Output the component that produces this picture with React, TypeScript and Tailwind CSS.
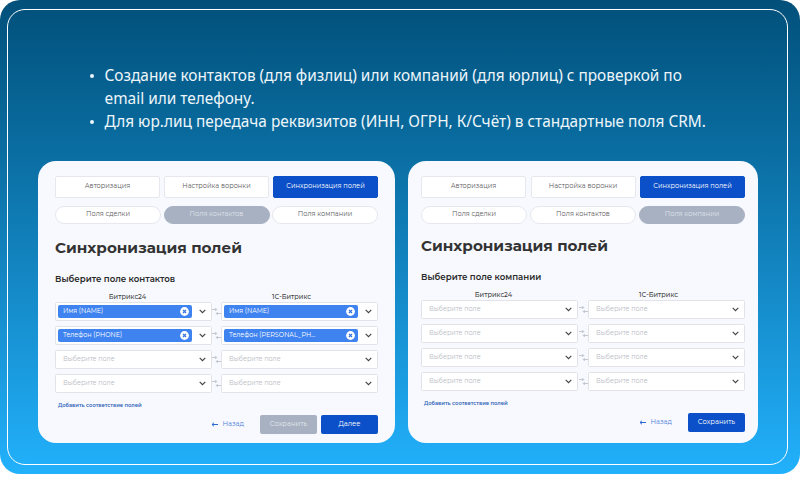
const font = "font-['Montserrat','Inter','Noto_Sans',sans-serif]";

function Chevron() {
  return (
    <svg width="7" height="5" viewBox="0 0 7 5" fill="none" className="shrink-0">
      <path d="M0.7 0.8 L3.5 3.6 L6.3 0.8" stroke="#3f3f46" strokeWidth="1.1" />
    </svg>
  );
}

function Swap() {
  return (
    <svg width="9" height="9" viewBox="0 0 9 9" fill="none" className="shrink-0">
      <path d="M0 2.5 H4.5 M3.2 1 L4.7 2.5 L3.2 4 M9 6.5 H4.5 M5.8 5 L4.3 6.5 L5.8 8" stroke="#aab0bb" strokeWidth="0.7" />
    </svg>
  );
}

function Select({ value }: { value?: string }) {
  return (
    <div className="flex h-[19px] w-[157px] items-center rounded-[1.5px] border-[1.5px] border-[#e1e3e8] bg-white pl-[1.5px] pr-[5.5px]">
      {value ? (
        <div className="flex h-[13px] w-[134px] items-center justify-between rounded-[2px] bg-[#3f83f0] pl-[5.5px] pr-[3px] text-[6.4px] text-white">
          <span>{value}</span>
          <svg width="9" height="9" viewBox="0 0 9 9" className="shrink-0">
            <circle cx="4.5" cy="4.5" r="4.4" fill="#fff" />
            <path d="M3 3 L6 6 M6 3 L3 6" stroke="#2f6fe0" strokeWidth="1.1" />
          </svg>
        </div>
      ) : (
        <span className="w-[134px] pl-[5.5px] text-[6.4px] text-[#b9bcc4]">Выберите поле</span>
      )}
      <span className="flex flex-1 justify-end"><Chevron /></span>
    </div>
  );
}

function Card({
  pad, w, inner, subtitle, active, rows, titleTop, saveMuted,
}: {
  pad: string; w: string; inner: string; subtitle: string; active: number;
  rows: [string?, string?][]; titleTop: string; saveMuted: boolean;
}) {
  const tabs = ["Авторизация", "Настройка воронки", "Синхронизация полей"];
  const pills = ["Поля сделки", "Поля контактов", "Поля компании"];
  return (
    <section className={`flex h-[282px] flex-col rounded-[18px] bg-[#f7f9fe] pt-[15px] ${pad} ${w}`}>
      <div className={`flex justify-between ${inner}`}>
        {tabs.map((t, i) => (
          <div key={t} className={`flex h-[22px] w-[105px] items-center justify-center rounded-[2px] border text-[6.6px] ${i === 2 ? "border-[#0b50c8] bg-[#0b50c8] text-white" : "border-[#e6e8ee] bg-white text-[#5c5c5c]"}`}>{t}</div>
        ))}
      </div>
      <div className={`mt-[8px] flex justify-between ${inner}`}>
        {pills.map((t, i) => (
          <div key={t} className={`flex h-[18px] w-[106px] items-center justify-center rounded-full border text-[6.6px] ${i === active ? "border-[#a8b1c2] bg-[#a8b1c2] text-[#dfe3ea]" : "border-[#e6e8ee] bg-white text-[#5c5c5c]"}`}>{t}</div>
        ))}
      </div>
      <h2 className={`text-[15.2px] font-bold leading-[20px] text-[#333333] ${titleTop}`}>Синхронизация полей</h2>
      <div className="mt-[15px] text-[8.6px] font-semibold leading-[12px] text-[#2b2b2b]">{subtitle}</div>
      <div className={`mt-[8px] flex justify-between text-center text-[6.6px] font-medium leading-[8px] text-[#444] ${inner}`}>
        <span className="w-[145px]">Битрикс24</span>
        <span className="w-[157px] pr-[16px]">1С-Битрикс</span>
      </div>
      <div className={`mt-[1px] flex flex-col gap-[5px] ${inner}`}>
        {rows.map((r, i) => (
          <div key={i} className="flex items-center justify-between">
            <Select value={r[0]} />
            <Swap />
            <Select value={r[1]} />
          </div>
        ))}
      </div>
      <div className="mt-[8px] pl-[3px] text-[5.2px] font-semibold leading-[8px] text-[#2f62b8]">Добавить соответствие полей</div>
      <div className={`mt-[6px] flex items-center justify-end ${inner}`}>
        <div className="mr-[16px] flex items-center gap-[4px] text-[6.8px] text-[#4f80d8]">
          <svg width="7" height="5" viewBox="0 0 7 5" fill="none"><path d="M7 2.5 H1 M3 0.7 L1 2.5 L3 4.3" stroke="#2a68d6" strokeWidth="1" /></svg>
          Назад
        </div>
        {saveMuted ? (
          <>
            <div className="flex h-[19px] w-[57px] items-center justify-center rounded-[2px] bg-[#a8b1c2] text-[6.8px] text-[#e3e6ec]">Сохранить</div>
            <div className="ml-[4px] flex h-[19px] w-[57px] items-center justify-center rounded-[2px] bg-[#0b50c8] text-[6.8px] text-white">Далее</div>
          </>
        ) : (
          <div className="flex h-[19px] w-[57px] items-center justify-center rounded-[2px] bg-[#0b50c8] text-[6.8px] text-white">Сохранить</div>
        )}
      </div>
    </section>
  );
}

function Bullet({ children }: { children: React.ReactNode }) {
  return (
    <li className="flex">
      <span className="mr-[11px] mt-[10px] h-[3.5px] w-[3.5px] shrink-0 rounded-full bg-[#eef6fb]" />
      <span>{children}</span>
    </li>
  );
}

export default function App() {
  return (
    <div className={`h-[485px] w-[800px] overflow-hidden bg-white ${font}`}>
      <div className="h-[474px] rounded-[20px] bg-gradient-to-b from-[#02507a] to-[#22b1fc] pl-[7px] pr-[12px] pt-[9px]">
        <div className="h-[456px] rounded-[18px] border border-white pl-[30px] pt-[54px]">
          <ul className="ml-[52px] w-[628px] font-['Noto_Sans',sans-serif] text-[15.4px] leading-[23px] text-[#eef6fb]">
            <Bullet>Создание контактов (для физлиц) или компаний (для юрлиц) с проверкой по email или телефону.</Bullet>
            <Bullet>Для юр.лиц передача реквизитов (ИНН, ОГРН, К/Счёт) в стандартные поля CRM.</Bullet>
          </ul>
          <div className="mt-[28px] flex gap-[13px]">
            <Card pad="pl-[17px]" w="w-[357px]" inner="w-[323px]" subtitle="Выберите поле контактов" active={1} saveMuted titleTop="mt-[14px]"
              rows={[["Имя (NAME)", "Имя (NAME)"], ["Телефон (PHONE)", "Телефон (PERSONAL_PH..."], [], []]} />
            <Card pad="pl-[13px]" w="w-[350px]" inner="w-[324px]" subtitle="Выберите поле компании" active={2} saveMuted={false} titleTop="mt-[12px]"
              rows={[[], [], [], []]} />
          </div>
        </div>
      </div>
    </div>
  );
}
